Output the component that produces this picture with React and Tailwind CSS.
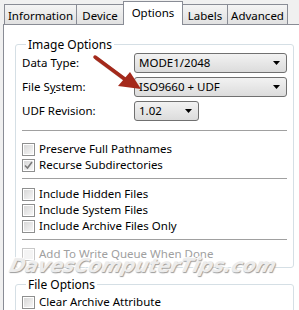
import React from 'react'

const font = { fontFamily: '"Noto Sans", "DejaVu Sans", sans-serif' }

function Tab({ label, active, width }) {
  if (active) {
    return (
      <div className={`relative z-10 -ml-px -mb-px h-[24px] ${width} pt-[2px] text-center bg-white border border-b-0 border-[#898c95] text-[11.5px] text-black`}>
        {label}
      </div>
    )
  }
  return (
    <div className={`mt-[3px] h-[21px] ${width} pt-[2px] text-center bg-gradient-to-b from-[#f4f4f4] to-[#e1e1e1] border border-[#898c95] -ml-px first:ml-0 text-[11.5px] text-black`}>
      {label}
    </div>
  )
}

function Combo({ value, width }) {
  return (
    <div className={`${width} h-[20px] rounded-[3px] border border-[#707070] bg-gradient-to-b from-[#f2f2f2] to-[#dcdcdc] flex items-center justify-between pl-[4px] pr-[6px] text-[11.5px] text-black`}>
      <span>{value}</span>
      <svg width="7" height="4" viewBox="0 0 7 4"><path d="M0 0h7L3.5 4z" fill="#000" /></svg>
    </div>
  )
}

function Check({ label, checked, disabled }) {
  return (
    <div className="h-[16px] flex items-center gap-[4px]">
      <div className={`w-[13px] h-[13px] border ${disabled ? 'border-[#c8c8c8]' : 'border-[#8e8f8f]'} bg-white p-px`}>
        <div className={`w-full h-full ${disabled ? 'bg-[#f4f4f4]' : 'bg-gradient-to-br from-[#d8d8d8] to-[#f6f6f6]'} flex items-center justify-center`}>
          {checked && (
            <svg width="9" height="9" viewBox="0 0 9 9"><path d="M1 4.5L3.5 7L8 1" stroke="#7a7a7a" strokeWidth="1.6" fill="none" /></svg>
          )}
        </div>
      </div>
      <span className={`text-[11.5px] ${disabled ? 'text-[#a0a0a0]' : 'text-black'}`}>{label}</span>
    </div>
  )
}

function Sep({ className }) {
  return <div className={`h-px bg-[#a0a0a0] ${className}`} />
}

export default function App() {
  return (
    <div className="relative w-[299px] h-[310px] overflow-hidden bg-[#f0f0f0]" style={font}>
      <div className="flex items-start pl-[4px] pt-px h-[24px]">
        <Tab label="Information" width="w-[73px]" />
        <Tab label="Device" width="w-[48px]" />
        <Tab label="Options" active width="w-[60px]" />
        <Tab label="Labels" width="w-[46px]" />
        <Tab label="Advanced" width="w-[61px]" />
      </div>
      <div className="ml-[3px] w-[310px] h-[300px] bg-white border border-[#898c95] pl-[11px] pt-[12px]">
        <fieldset className="w-[279px] border border-[#d5dfe5] rounded-[3px] px-[6px] pb-[5px]">
          <legend className="ml-[4px] px-[2px] text-[12px] leading-[15px] text-black">Image Options</legend>
          <div className="mt-px flex flex-col gap-[4px]">
            <div className="flex items-center">
              <span className="w-[112px] text-[11.5px]">Data Type:</span>
              <Combo value="MODE1/2048" width="w-[153px]" />
            </div>
            <div className="flex items-center">
              <span className="w-[112px] text-[11.5px]">File S<span className="underline">y</span>stem:</span>
              <Combo value="ISO9660 + UDF" width="w-[153px]" />
            </div>
            <div className="flex items-center">
              <span className="w-[112px] text-[11.5px]">UDF Revision:</span>
              <Combo value="1.02" width="w-[65px]" />
            </div>
          </div>
          <Sep className="mt-[9px]" />
          <div className="mt-[10px]">
            <Check label="Preserve Full Pathnames" />
            <Check label="Recurse Subdirectories" checked />
          </div>
          <Sep className="mt-[5px]" />
          <div className="mt-[7px]">
            <Check label="Include Hidden Files" />
            <Check label="Include System Files" />
            <Check label="Include Archive Files Only" />
          </div>
          <Sep className="mt-[5px]" />
          <div className="mt-[6px]">
            <Check label="Add To Write Queue When Done" disabled />
          </div>
        </fieldset>
        <fieldset className="mt-[9px] w-[279px] border border-[#d5dfe5] rounded-[3px] px-[6px] pb-[5px]">
          <legend className="ml-[4px] px-[2px] text-[12px] leading-[15px] text-black">File Options</legend>
          <div className="mt-[2px]">
            <Check label="Clear Archive Attribute" />
          </div>
        </fieldset>
      </div>

      <div
        className="absolute left-[10px] top-[254px] w-[276px] text-[19px] leading-[22px] italic font-bold text-[#ececec] pointer-events-none whitespace-nowrap"
        style={{ fontFamily: '"DejaVu Sans", sans-serif', textShadow: '1px 1px 1px #9a9a9a, -1px -1px 0 #ffffff', transform: 'skewX(-14deg)' }}
      >
        DavesComputerTips.com
      </div>

      <svg className="absolute left-0 top-0 pointer-events-none" width="299" height="310">
        <path d="M95 57 L126 80" stroke="#5a1a10" strokeOpacity="0.35" strokeWidth="4" transform="translate(1 1)" />
        <path d="M95 57 L126 80" stroke="#a4291b" strokeWidth="3.5" strokeLinecap="round" />
        <path d="M141 89 L118 86 L130 72 Z" fill="#a4291b" />
      </svg>
    </div>
  )
}
